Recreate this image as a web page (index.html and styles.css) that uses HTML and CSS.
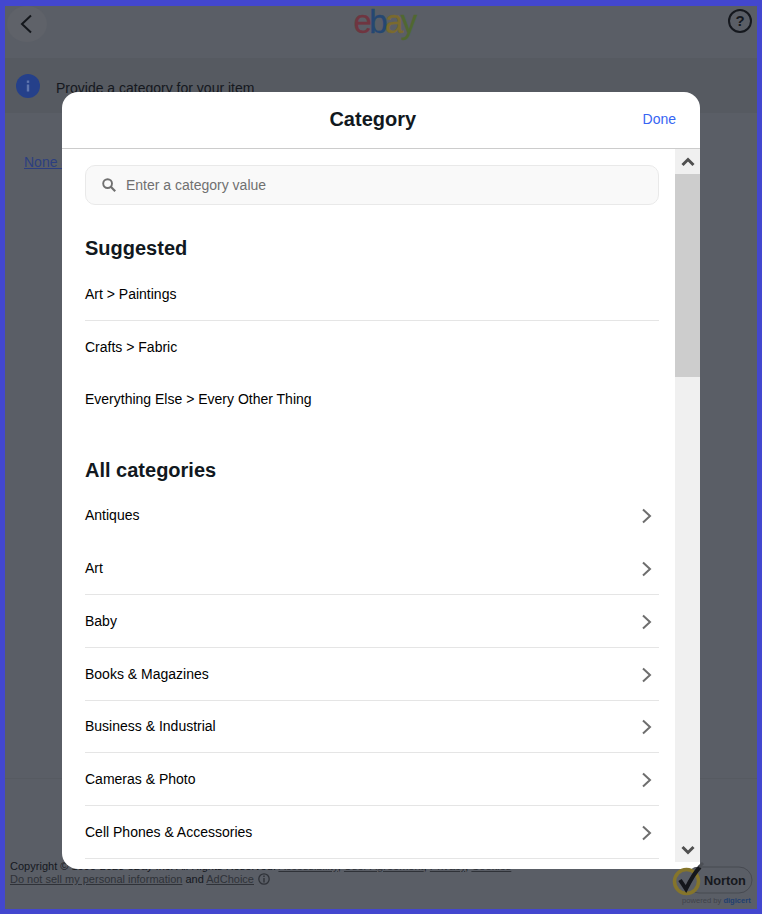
FILE: index.html
```html
<!DOCTYPE html>
<html lang="en">
<head>
<meta charset="utf-8">
<title>Category</title>
<link rel="stylesheet" href="styles.css">
</head>
<body>
<div class="frame">
  <header class="topbar">
    <button class="back" aria-label="Back">
      <svg width="14" height="20" viewBox="0 0 14 20"><path d="M12 1.5 3 10l9 8.5" fill="none" stroke="#14171c" stroke-width="2"/></svg>
    </button>
    <div class="logo"><span class="l-e">e</span><span class="l-b">b</span><span class="l-a">a</span><span class="l-y">y</span></div>
    <svg class="help" width="24" height="24" viewBox="0 0 24 24"><circle cx="12" cy="12" r="11" fill="none" stroke="#15181e" stroke-width="2"/><text x="12" y="17" text-anchor="middle" class="help-q">?</text></svg>
  </header>
  <div class="notice">
    <svg width="24" height="24" viewBox="0 0 24 24"><circle cx="12" cy="12" r="12" fill="#25408a"/><rect x="10.8" y="10.5" width="2.4" height="7" fill="#5f75ad"/><rect x="10.8" y="6.5" width="2.4" height="2.4" fill="#5f75ad"/></svg>
    <span class="notice-text">Provide a category for your item</span>
  </div>
  <div class="value"><a href="#">None available</a></div>
  <footer class="footer">
    <p class="legal">Copyright © 1995-2023 eBay Inc. All Rights Reserved. <a href="#">Accessibility</a>, <a href="#">User Agreement</a>, <a href="#">Privacy</a>, <a href="#">Cookies</a></p>
    <p><a href="#">Do not sell my personal information</a> and <a href="#">AdChoice</a>
      <svg class="adchoice" width="12" height="12" viewBox="0 0 12 12"><circle cx="6" cy="6" r="5.2" fill="none" stroke="#2f3238" stroke-width="1.3"/><path d="M6 5v4.5M6 2.6v1.4" stroke="#2f3238" stroke-width="1.4"/></svg>
    </p>
  </footer>

  <section class="modal">
    <div class="modal-head">
      <h1>Category</h1>
      <a class="done" href="#">Done</a>
    </div>
    <div class="modal-body">
      <div class="scroller">
        <div class="search">
          <svg width="14" height="14" viewBox="0 0 14 14"><circle cx="5.6" cy="5.6" r="4.4" fill="none" stroke="#707070" stroke-width="1.9"/><path d="m8.8 8.8 4.4 4.4" stroke="#707070" stroke-width="2.2"/></svg>
          <span>Enter a category value</span>
        </div>
        <h2>Suggested</h2>
        <div class="row ruled">Art &gt; Paintings</div>
        <div class="row">Crafts &gt; Fabric</div>
        <div class="row">Everything Else &gt; Every Other Thing</div>
        <h2 class="all">All categories</h2>
        <div class="row">Antiques<svg class="chev" width="12" height="16" viewBox="0 0 12 16"><path d="m2 1.5 7 6.5-7 6.5" fill="none" stroke="#6e6e6e" stroke-width="2"/></svg></div>
        <div class="row ruled">Art<svg class="chev" width="12" height="16" viewBox="0 0 12 16"><path d="m2 1.5 7 6.5-7 6.5" fill="none" stroke="#6e6e6e" stroke-width="2"/></svg></div>
        <div class="row ruled">Baby<svg class="chev" width="12" height="16" viewBox="0 0 12 16"><path d="m2 1.5 7 6.5-7 6.5" fill="none" stroke="#6e6e6e" stroke-width="2"/></svg></div>
        <div class="row ruled">Books &amp; Magazines<svg class="chev" width="12" height="16" viewBox="0 0 12 16"><path d="m2 1.5 7 6.5-7 6.5" fill="none" stroke="#6e6e6e" stroke-width="2"/></svg></div>
        <div class="row ruled">Business &amp; Industrial<svg class="chev" width="12" height="16" viewBox="0 0 12 16"><path d="m2 1.5 7 6.5-7 6.5" fill="none" stroke="#6e6e6e" stroke-width="2"/></svg></div>
        <div class="row ruled">Cameras &amp; Photo<svg class="chev" width="12" height="16" viewBox="0 0 12 16"><path d="m2 1.5 7 6.5-7 6.5" fill="none" stroke="#6e6e6e" stroke-width="2"/></svg></div>
        <div class="row ruled">Cell Phones &amp; Accessories<svg class="chev" width="12" height="16" viewBox="0 0 12 16"><path d="m2 1.5 7 6.5-7 6.5" fill="none" stroke="#6e6e6e" stroke-width="2"/></svg></div>
      </div>
      <div class="scrollbar">
        <div class="sb-btn"><svg width="14" height="10" viewBox="0 0 14 10"><path d="m1.5 8 5.5-5.5L12.500 8" fill="none" stroke="#505050" stroke-width="3"/></svg></div>
        <div class="sb-thumb"></div>
        <div class="sb-track"></div>
        <div class="sb-btn"><svg width="14" height="10" viewBox="0 0 14 10"><path d="m1.500 2 5.500 5.500L12.500 2" fill="none" stroke="#505050" stroke-width="3"/></svg></div>
      </div>
    </div>
  </section>

  <div class="norton">
    <svg width="80" height="46" viewBox="0 0 80 46">
      <rect x="14" y="6" width="66" height="26" rx="13" fill="#5a5e66" stroke="#474a51" stroke-width="1"/>
      <circle cx="14.500" cy="20.500" r="12" fill="#5a5e66" stroke="#85752b" stroke-width="3.500"/>
      <path d="M8 19l6 9C18 20 23 11 28 6" fill="none" stroke="#14161b" stroke-width="4"/>
      <path d="M27 6l4-4" fill="none" stroke="#4c4f55" stroke-width="3"/>
      <text x="32" y="24" class="n-word">Norton</text>
      <text x="10" y="42" class="n-sub">powered by <tspan class="n-digi">digicert</tspan></text>
    </svg>
  </div>
</div>
</body>
</html>
```
FILE: styles.css
```css
* { box-sizing: border-box; }
html, body { margin: 0; padding: 0; }
body { width: 762px; height: 914px; font-family: "Liberation Sans", Arial, sans-serif; color: #000; }
h1, h2, p { margin: 0; }

.frame {
  position: relative;
  height: 914px;
  border: 5px solid #4347cf;
  border-top-width: 6px;
  background: #5a5e66;
  overflow: hidden;
  display: flex;
  flex-direction: column;
}

.topbar {
  height: 52px;
  flex: none;
  position: relative;
  display: flex;
  align-items: flex-start;
  justify-content: space-between;
  padding-right: 5px;
}
.back {
  width: 40px;
  height: 36px;
  margin-left: 2px;
  padding: 0 3px 0 0;
  border: 0;
  border-radius: 50%;
  background: #5f6269;
  display: flex;
  align-items: center;
  justify-content: center;
}
.logo {
  font-size: 33px;
  line-height: 36px;
  letter-spacing: -2.6px;
  margin-top: -2px;
  margin-left: -7px;
  -webkit-text-stroke: 0.3px currentColor;
}
.l-e { color: #6f3540; }
.l-b { color: #254772; }
.l-a { color: #7a6a2e; }
.l-y { color: #506831; }
.help { margin-top: 3px; }
.help-q { font-size: 15px; font-weight: 700; fill: #15181e; }

.notice {
  height: 55px;
  flex: none;
  background: #565a61;
  display: flex;
  align-items: center;
  gap: 16px;
  padding-left: 11px;
  font-size: 14px;
  color: #15181e;
}
.notice-text { padding-top: 4px; }

.value { padding: 41px 0 0 19px; font-size: 14px; line-height: 16px; }
.value a { color: #2c3e80; }

.footer {
  margin-top: auto;
  height: 131px;
  border-top: 1px solid #565a61;
  padding: 81px 0 0 5px;
  font-size: 11px;
  line-height: 13px;
  color: #15181e;
}
.footer a { color: #2f3238; }
.legal { letter-spacing: 0.02px; }
.adchoice { vertical-align: -2px; margin-left: 1px; }

.modal {
  position: absolute;
  left: 57px;
  top: 86px;
  width: 638px;
  height: 777px;
  background: #fff;
  border-radius: 16px 16px 0 16px;
  padding-bottom: 7px;
  display: flex;
  flex-direction: column;
  overflow: hidden;
}
.modal-head {
  height: 57px;
  flex: none;
  display: flex;
  align-items: center;
  padding: 0 24px 3px 41px;
  border-bottom: 1px solid #ccc;
}
.modal-head h1 { flex: 1; text-align: center; font-size: 20px; line-height: 24px; font-weight: 700; color: #111820; }
.done { font-size: 14px; color: #3665f3; text-decoration: none; }

.modal-body { flex: 1; min-height: 0; display: flex; }
.scroller { flex: 1; min-width: 0; padding: 16px 16px 0 23px; overflow: hidden; font-size: 14px; }
.search {
  height: 40px;
  display: flex;
  align-items: center;
  gap: 10px;
  padding-left: 16px;
  background: #f9f9f9;
  border: 1px solid #e9e9e9;
  border-radius: 10px;
  color: #707070;
}
h2 {
  height: 40px;
  margin-top: 23px;
  font-size: 20px;
  line-height: 40px;
  font-weight: 700;
  color: #111820;
}
h2.all { margin-top: 23.25px; line-height: 41px; }
.row {
  height: 52.75px;
  display: flex;
  align-items: center;
  justify-content: space-between;
  padding-right: 6px;
  border-bottom: 1px solid transparent;
  color: #000;
}
.row.ruled { border-bottom-color: #e5e5e5; }
.chev { flex: none; margin-top: 2px; }

.scrollbar { width: 25px; flex: none; display: flex; flex-direction: column; background: #f0f0f0; }
.sb-btn { height: 25px; flex: none; display: flex; align-items: center; justify-content: center; }
.sb-thumb { height: 203px; flex: none; background: #cdcdcd; }
.sb-track { flex: 1; }

.norton {
  position: absolute;
  left: 667px;
  top: 855px;
  width: 80px;
  height: 46px;
}
.norton svg { display: block; overflow: visible; }
.n-word { font-size: 12.800px; font-weight: 700; fill: #16181d; }
.n-sub { font-size: 7.600px; fill: #3f424a; }
.n-digi { font-weight: 700; fill: #1f3f70; }
```
